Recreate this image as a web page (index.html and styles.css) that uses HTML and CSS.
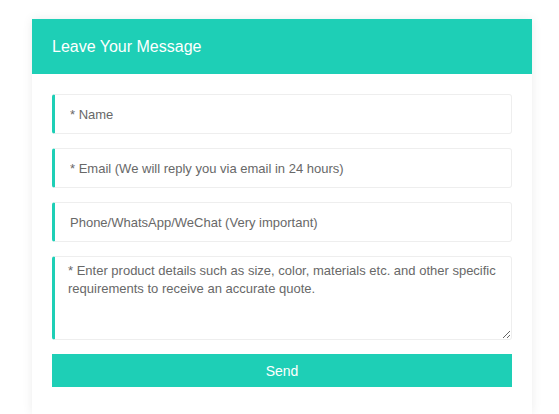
FILE: index.html
```html
<!DOCTYPE html>
<html lang="en">
<head>
<meta charset="utf-8">
<title>Leave Your Message</title>
<link rel="stylesheet" href="styles.css">
</head>
<body>
<div class="card">
  <div class="card-head">Leave Your Message</div>
  <form class="card-body">
    <input class="field" type="text" placeholder="* Name">
    <input class="field" type="text" placeholder="* Email (We will reply you via email in 24 hours)">
    <input class="field" type="text" placeholder="Phone/WhatsApp/WeChat (Very important)">
    <textarea class="field area" placeholder="* Enter product details such as size, color, materials etc. and other specific requirements to receive an accurate quote."></textarea>
    <button class="send" type="button">Send</button>
  </form>
</div>
</body>
</html>
```

FILE: styles.css
```css
html, body {
  margin: 0;
  padding: 0;
  background: #ffffff;
}
body {
  font-family: "Liberation Sans", Arial, sans-serif;
  padding: 19px 27px 0 32px;
}
.card {
  width: 500px;
  background: #ffffff;
  box-shadow: 0 0 10px rgba(0, 0, 0, 0.08);
  height: 395px;
  overflow: hidden;
}
.card-head {
  height: 55px;
  background: #1ecfb6;
  color: #ffffff;
  font-size: 16px;
  line-height: 55px;
  padding-left: 20px;
}
.card-body {
  display: flex;
  flex-direction: column;
  gap: 14px;
  padding: 20px 20px 0 20px;
}
.field {
  display: block;
  box-sizing: border-box;
  width: 460px;
  height: 40px;
  margin: 0;
  border: 1px solid #eeeeee;
  border-left: 3px solid #1ecfb6;
  border-radius: 3px;
  padding: 0 15px;
  font-family: "Liberation Sans", Arial, sans-serif;
  font-size: 13px;
  color: #333333;
  background: #ffffff;
  outline: none;
}
.field::placeholder {
  color: #686868;
  opacity: 1;
}
.area {
  height: 84px;
  padding: 5px 13px;
  line-height: 18px;
  resize: vertical;
}
.send {
  display: block;
  width: 460px;
  height: 33px;
  margin: 0;
  border: none;
  background: #1ecfb6;
  color: #ffffff;
  font-family: "Liberation Sans", Arial, sans-serif;
  font-size: 14px;
  cursor: pointer;
}
```
